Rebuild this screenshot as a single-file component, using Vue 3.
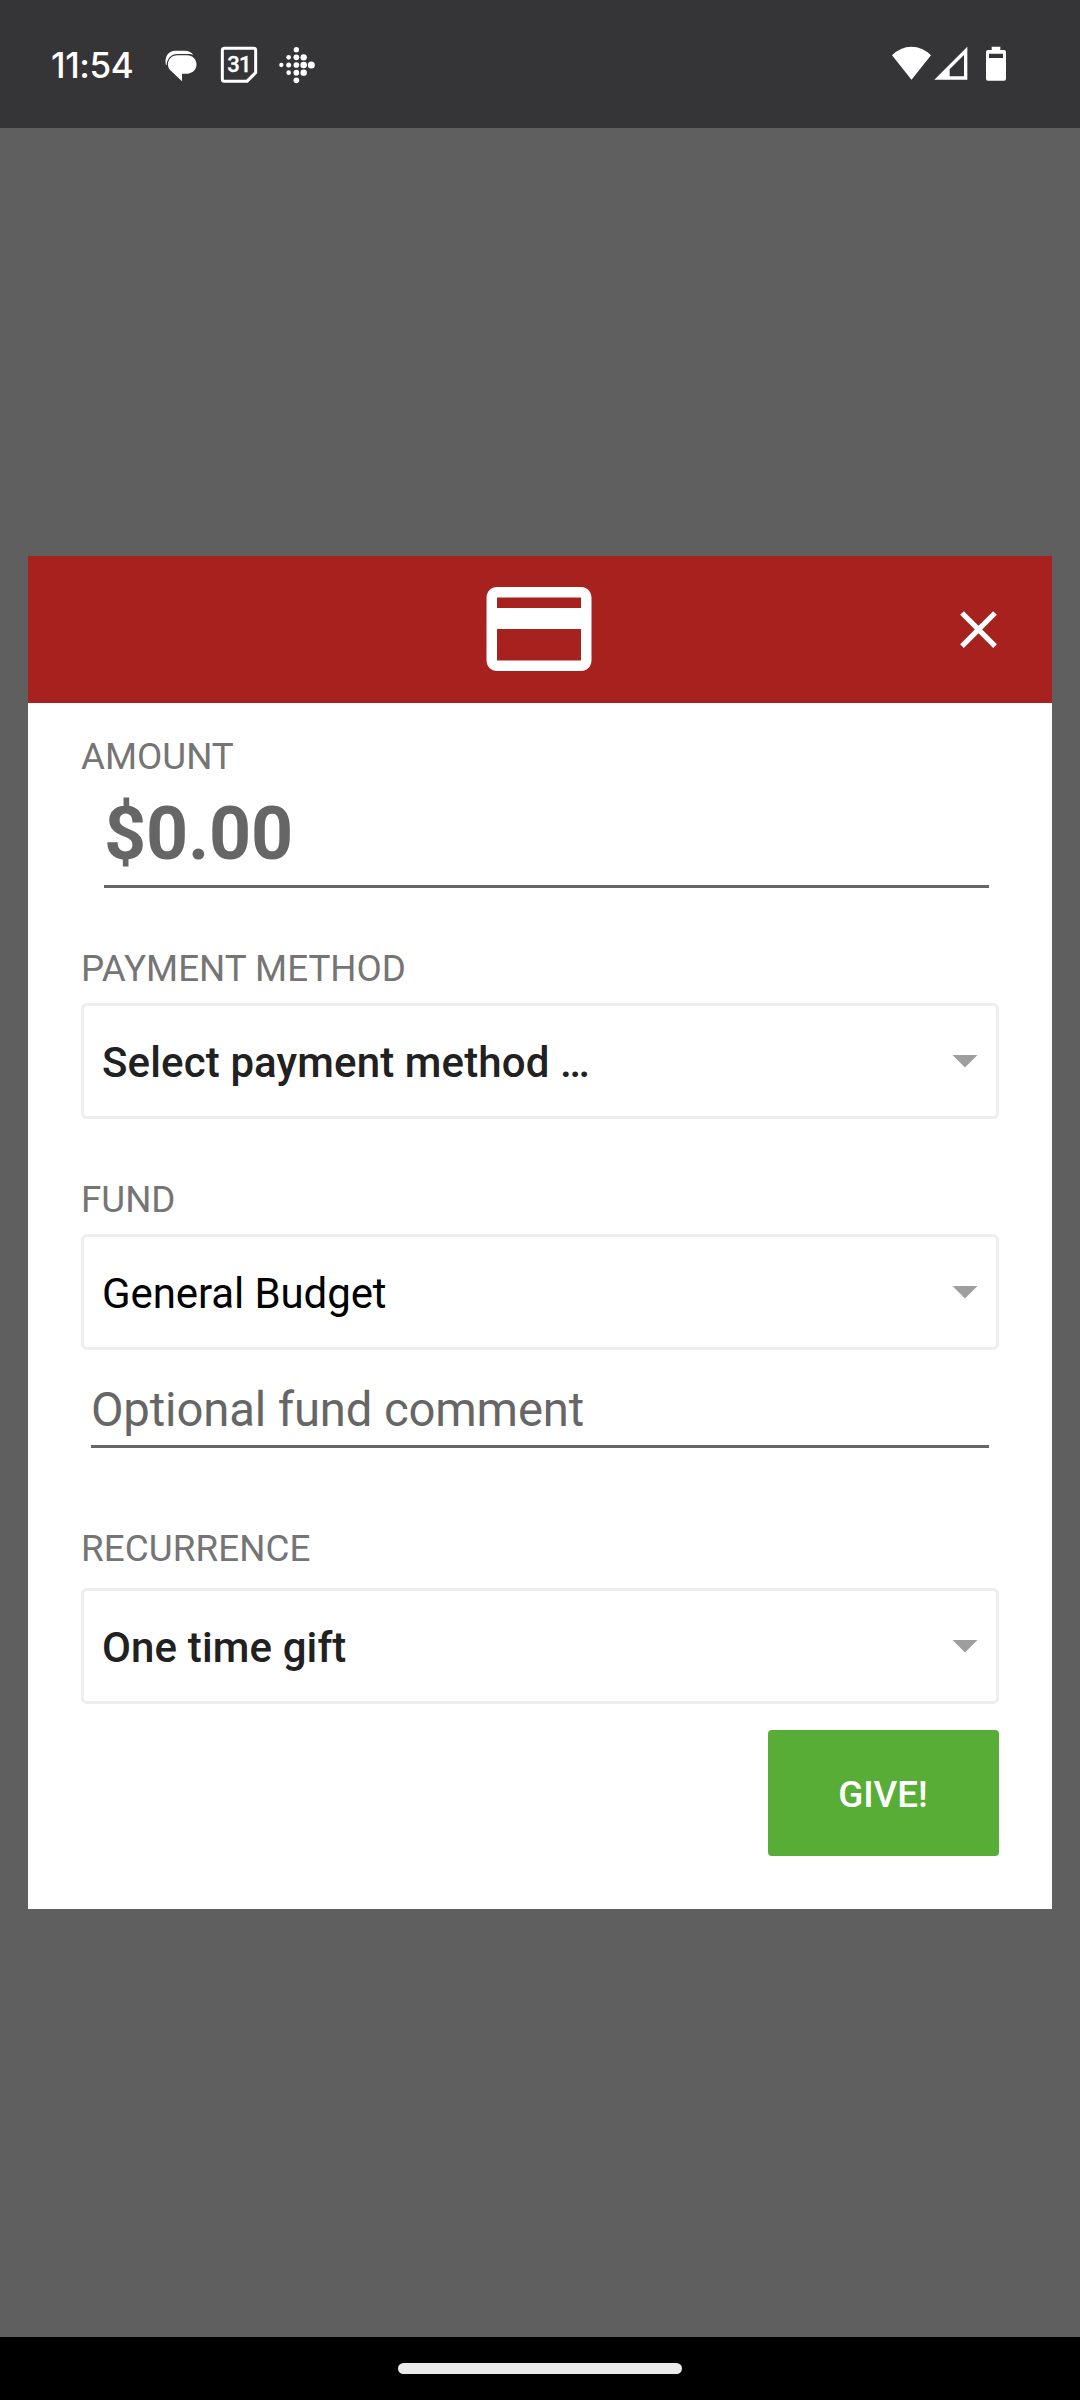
<script setup>
const fitbitDots = [
  [754, 105, 6.5],
  [776, 82, 7], [776, 105, 7.5], [776, 128, 7],
  [799, 59, 8], [799, 82, 8.5], [799, 105, 8.5], [799, 128, 8.5], [799, 151, 8.5],
  [821, 82, 9.5], [821, 105, 10], [821, 128, 9.5],
  [844, 105, 10.5],
]
</script>

<template>
  <div class="screen">
    <header class="status">
      <div class="status-left">
        <span class="time">11:54</span>
        <svg class="messages" width="33" height="33" viewBox="402 57 99 99">
          <path d="M408 106C402 82 414 62 436 62H464C477 62 485 67 490 74L480 72H442C424 72 411 86 410 104Z" fill="#fff" />
          <path d="M442 75.500H471C488 75.500 499.500 88 499.500 103C499.500 119 488 131 471 131H456V154L421 121C416 116 414 110 414 103C414 88 425 75.500 442 75.500Z" fill="#fff" />
        </svg>
        <svg class="calendar" width="38" height="38" viewBox="570 48 114 114">
          <path d="M583 55H671Q677 55 677 61V128L651 154H583Q577 154 577 148V61Q577 55 583 55Z" fill="none" stroke="#fff" stroke-width="9" stroke-linejoin="round" />
          <path d="M645 154L677 123V128L651 154Z" fill="#fff" />
          <text x="627" y="127" text-anchor="middle" class="day">31</text>
        </svg>
        <svg class="fitbit" width="38" height="38" viewBox="744 48 114 114">
          <circle v-for="(d, i) in fitbitDots" :key="i" :cx="d[0]" :cy="d[1]" :r="d[2]" fill="#fff" />
        </svg>
      </div>
      <div class="status-right">
        <svg class="wifi" width="39" height="35" viewBox="96 79 117 105">
          <path d="M96 107Q121 81 154.500 81Q188 81 213 107L154.500 180Z" fill="#fff" />
        </svg>
        <svg class="signal" width="34" height="35" viewBox="221 79 102 105">
          <path d="M222 180L321 81V180ZM268 170H311V106L268 149Z" fill="#fff" fill-rule="evenodd" />
        </svg>
        <svg class="battery" width="20" height="35" viewBox="378 79 60 105">
          <path d="M395 81H421V91H432Q438 91 438 97V177Q438 183 432 183H384Q378 183 378 177V97Q378 91 384 91H395ZM387 102V115H429V102Z" fill="#fff" fill-rule="evenodd" />
        </svg>
      </div>
    </header>

    <main class="backdrop">
      <section class="dialog">
        <div class="dialog-head">
          <svg class="card-icon" width="126" height="126" viewBox="0 0 24 24">
            <path fill="#fff" d="M20 4H4c-1.110 0-1.990.89-1.990 2L2 18c0 1.110.89 2 2 2h16c1.110 0 2-.89 2-2V6c0-1.110-.89-2-2-2zm0 14H4v-6h16v6zm0-10H4V6h16v2z" />
          </svg>
          <svg class="close-icon" width="63" height="63" viewBox="0 0 24 24">
            <path fill="#fff" d="M19 6.410L17.590 5 12 10.590 6.410 5 5 6.410 10.590 12 5 17.590 6.410 19 12 13.410 17.590 19 19 17.590 13.410 12z" />
          </svg>
        </div>

        <div class="form">
          <div class="label">AMOUNT</div>
          <div class="amount">$0.00</div>

          <div class="label label-payment">PAYMENT METHOD</div>
          <div class="select">
            <span class="medium">Select payment method …</span>
            <i class="caret"></i>
          </div>

          <div class="label label-fund">FUND</div>
          <div class="select">
            <span class="regular">General Budget</span>
            <i class="caret"></i>
          </div>
          <div class="comment">Optional fund comment</div>

          <div class="label label-recurrence">RECURRENCE</div>
          <div class="select select-recurrence">
            <span class="medium">One time gift</span>
            <i class="caret"></i>
          </div>

          <button class="give">GIVE!</button>
        </div>
      </section>
    </main>

    <footer class="nav"><div class="pill"></div></footer>
  </div>
</template>

<style>
body {
  margin: 0;
  background: #5f5f5f;
}
</style>

<style scoped>
.screen {
  width: 1080px;
  height: 2400px;
  display: flex;
  flex-direction: column;
  background: #5f5f5f;
  font-family: Roboto, "Liberation Sans", sans-serif;
  overflow: hidden;
}
.screen svg {
  display: block;
  flex: none;
}
.status {
  height: 128px;
  box-sizing: border-box;
  background: #353537;
  display: flex;
  justify-content: space-between;
  padding: 46px 74px 0 51px;
}
.status-left,
.status-right {
  display: flex;
  align-items: flex-start;
}
.time {
  width: 113px;
  color: #fff;
  font: 500 35px/40px Inter, Roboto, sans-serif;
  letter-spacing: -0.4px;
  margin-top: -1px;
  white-space: nowrap;
}
.messages {
  margin-top: 3px;
}
.calendar {
  margin-left: 23px;
}
.day {
  font: 500 66px Roboto, sans-serif;
  letter-spacing: -2px;
  fill: #fff;
  stroke: #fff;
  stroke-width: 1px;
}
.fitbit {
  margin-left: 20px;
}
.signal {
  margin-left: 3px;
}
.battery {
  margin-left: 18px;
}
.backdrop {
  height: 2209px;
  box-sizing: border-box;
  padding: 428px 28px 0;
}
.dialog {
  height: 1353px;
  background: #fff;
}
.dialog-head {
  height: 147px;
  box-sizing: border-box;
  background: #a7211e;
  display: flex;
  align-items: flex-start;
  padding-top: 10px;
}
.card-icon {
  margin-left: 447.5px;
}
.close-icon {
  margin: 32px 0 0 345px;
}
.form {
  display: flex;
  flex-direction: column;
  padding: 32px 53px 0;
}
.label {
  font-size: 36.75px;
  line-height: 43px;
  color: #757575;
}
.amount {
  margin: 13px 10px 0 23px;
  height: 97px;
  box-sizing: border-box;
  border-bottom: 3px solid #666;
  font-size: 73.5px;
  line-height: 86px;
  font-weight: 700;
  letter-spacing: -0.2px;
  color: #666;
}
.label-payment {
  margin-top: 59px;
}
.select {
  margin-top: 13px;
  height: 116px;
  box-sizing: border-box;
  border: 3px solid #eee;
  border-radius: 6px;
  display: flex;
  align-items: center;
  justify-content: space-between;
  padding: 0 18px;
  font-size: 42px;
  line-height: 50px;
  color: #000;
}
.select span {
  padding-top: 3px;
}
.medium {
  font-weight: 500;
  letter-spacing: 0.13px;
  color: #212121;
}
.regular {
  letter-spacing: -0.1px;
}
.caret {
  width: 26px;
  height: 13px;
  background: #9e9e9e;
  clip-path: polygon(0 0, 100% 0, 50% 100%);
}
.label-fund {
  margin-top: 59px;
}
.comment {
  margin: 32px 10px 0 10px;
  height: 66px;
  box-sizing: border-box;
  border-bottom: 3px solid #666;
  padding-top: 1px;
  font-size: 47.25px;
  line-height: 55px;
  letter-spacing: -0.14px;
  color: #666;
}
.label-recurrence {
  margin-top: 79px;
  letter-spacing: 0.1px;
}
.select-recurrence {
  margin-top: 18px;
}
.give {
  align-self: flex-end;
  margin-top: 26px;
  width: 231px;
  height: 126px;
  border: 0;
  border-radius: 4px;
  background: #57ad36;
  color: #fff;
  font: 500 36.75px/43px Roboto, sans-serif;
  padding: 2px 1px 0 0;
}
.nav {
  height: 63px;
  background: #000;
  display: flex;
  justify-content: center;
}
.pill {
  width: 284px;
  height: 11px;
  margin-top: 26px;
  border-radius: 6px;
  background: #ebebeb;
}
</style>
